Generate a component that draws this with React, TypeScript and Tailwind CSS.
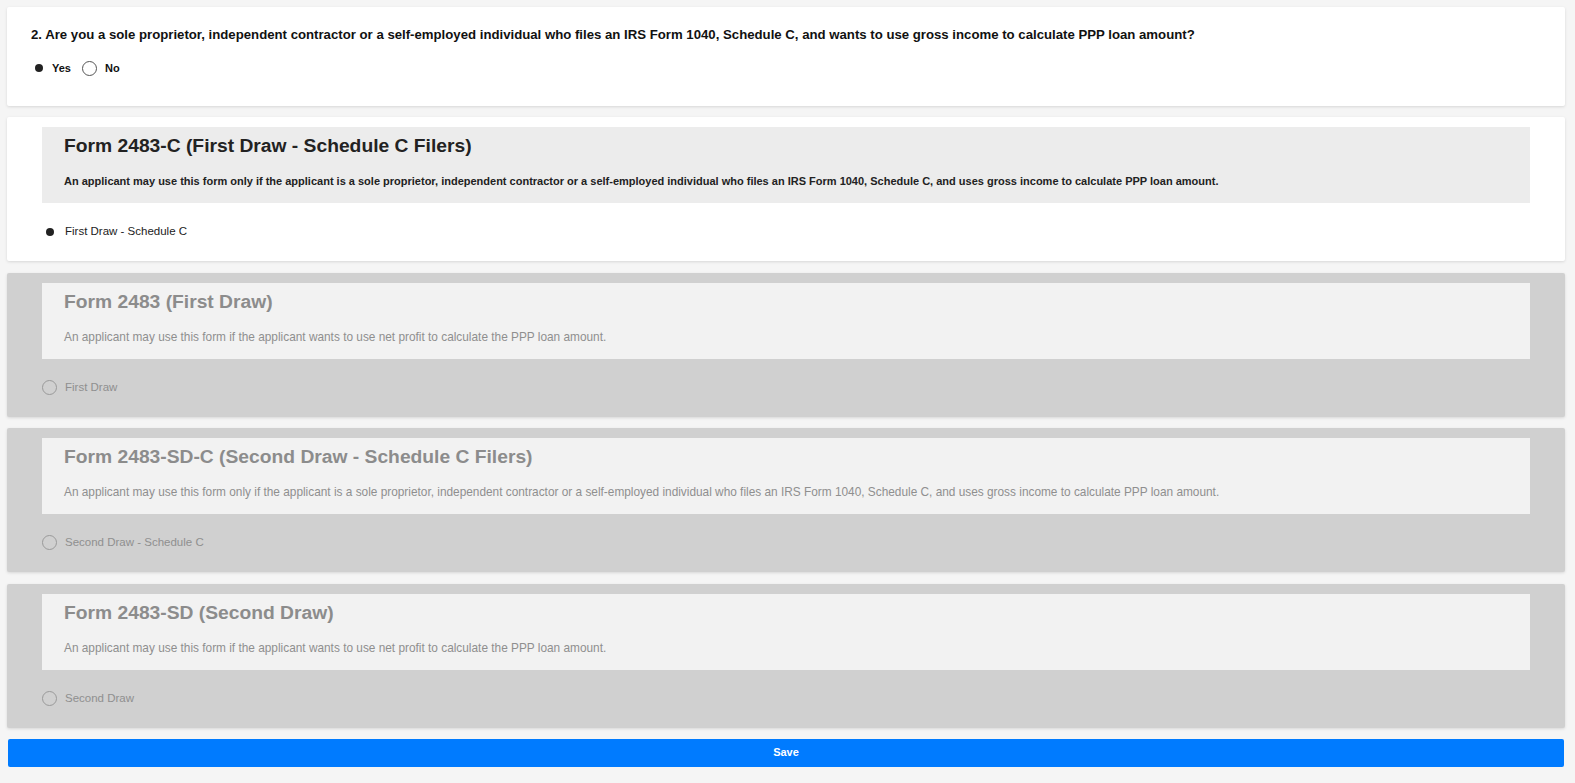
import React from 'react';

type FormOption = {
  title: string;
  description: string;
  label: string;
  selected?: boolean;
  disabled?: boolean;
};

const forms: FormOption[] = [
  {
    title: 'Form 2483-C (First Draw - Schedule C Filers)',
    description:
      'An applicant may use this form only if the applicant is a sole proprietor, independent contractor or a self-employed individual who files an IRS Form 1040, Schedule C, and uses gross income to calculate PPP loan amount.',
    label: 'First Draw - Schedule C',
    selected: true,
  },
  {
    title: 'Form 2483 (First Draw)',
    description:
      'An applicant may use this form if the applicant wants to use net profit to calculate the PPP loan amount.',
    label: 'First Draw',
    disabled: true,
  },
  {
    title: 'Form 2483-SD-C (Second Draw - Schedule C Filers)',
    description:
      'An applicant may use this form only if the applicant is a sole proprietor, independent contractor or a self-employed individual who files an IRS Form 1040, Schedule C, and uses gross income to calculate PPP loan amount.',
    label: 'Second Draw - Schedule C',
    disabled: true,
  },
  {
    title: 'Form 2483-SD (Second Draw)',
    description:
      'An applicant may use this form if the applicant wants to use net profit to calculate the PPP loan amount.',
    label: 'Second Draw',
    disabled: true,
  },
];

const Radio = ({ checked, muted }: { checked?: boolean; muted?: boolean }) =>
  checked ? (
    <span className="flex h-[15px] w-[15px] shrink-0 items-center justify-center">
      <span className="block h-[8px] w-[8px] rounded-full bg-[#222]" />
    </span>
  ) : (
    <span
      className={
        'block h-[15px] w-[15px] shrink-0 rounded-full border ' +
        (muted ? 'border-[#9a9a9a]' : 'border-[#555]')
      }
    />
  );

const FormCard = ({ form }: { form: FormOption }) => {
  const off = form.disabled;
  return (
    <div
      className={
        'flex h-[144px] flex-col rounded-[2px] px-[35px] pt-[10px] shadow-[0_1px_3px_rgba(0,0,0,0.12)] ' +
        (off ? 'bg-[#d0d0d0]' : 'bg-white')
      }
    >
      <div
        className={
          'flex h-[76px] flex-col pl-[22px] pt-[9px] ' + (off ? 'bg-[#f2f2f2]' : 'bg-[#ececec]')
        }
      >
        <h2
          className={
            'text-[19.25px] font-bold leading-[20px] ' + (off ? 'text-[#8c8c8c]' : 'text-[#222]')
          }
        >
          {form.title}
        </h2>
        <p
          className={
            'mt-[18px] leading-[14px] ' +
            (off ? 'text-[11.85px] font-normal text-[#8f8f8f]' : 'text-[11px] font-bold text-[#222]')
          }
        >
          {form.description}
        </p>
      </div>
      <label className="mt-[20px] flex items-center gap-[8px]">
        <Radio checked={form.selected} muted={off} />
        <span className={'text-[11.5px] ' + (off ? 'text-[#8f8f8f]' : 'font-medium text-[#222]')}>
          {form.label}
        </span>
      </label>
    </div>
  );
};

export default function App() {
  return (
    <div
      className="min-h-[783px] bg-[#f5f5f5] pb-[16px] pl-[7px] pr-[10px] pt-[7px]"
      style={{ fontFamily: '"Liberation Sans", Arial, sans-serif' }}
    >
      <div className="flex flex-col gap-[11.5px]">
        <div className="h-[98.5px] rounded-[2px] bg-white px-[24px] pt-[20px] shadow-[0_1px_3px_rgba(0,0,0,0.12)]">
          <p className="text-[13.2px] font-bold leading-[16px] text-[#111]">
            2. Are you a sole proprietor, independent contractor or a self-employed individual who files an IRS
            Form 1040, Schedule C, and wants to use gross income to calculate PPP loan amount?
          </p>
          <div className="mt-[17px] flex items-center text-[11px] font-bold text-[#111]">
            <Radio checked />
            <span className="ml-[6px]">Yes</span>
            <span className="ml-[11px]">
              <Radio />
            </span>
            <span className="ml-[8px]">No</span>
          </div>
        </div>
        {forms.map((form) => (
          <FormCard key={form.title} form={form} />
        ))}
      </div>
      <button className="mt-[11px] ml-[1px] h-[28px] w-[1556px] rounded-[2px] bg-[#007bff] text-[11px] font-bold text-white">
        Save
      </button>
    </div>
  );
}
